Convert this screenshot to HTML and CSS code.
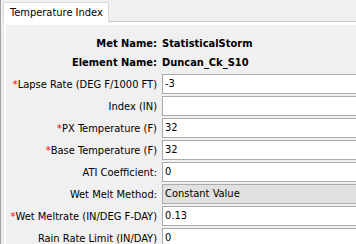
FILE: index.html
```html
<!DOCTYPE html>
<html lang="en">

<head>
  <meta charset="UTF-8" />
  <title>Temperature Index</title>
  <link rel="stylesheet" href="styles.css">
</head>

<body>

  <div class="tabs">
    <div class="tab">Temperature Index</div>
  </div>

  <div class="pane">
    <div class="form">
      <div class="label bold">Met Name:</div>
      <div class="value bold">StatisticalStorm</div>
      <div class="label bold">Element Name:</div>
      <div class="value bold">Duncan_Ck_S10</div>

      <div class="label"><span class="req">*</span>Lapse Rate (DEG F/1000 FT)</div>
      <div class="field">-3</div>

      <div class="label">Index (IN)</div>
      <div class="field"></div>

      <div class="label"><span class="req">*</span>PX Temperature (F)</div>
      <div class="field">32</div>

      <div class="label"><span class="req">*</span>Base Temperature (F)</div>
      <div class="field">32</div>

      <div class="label">ATI Coefficient:</div>
      <div class="field">0</div>

      <div class="label">Wet Melt Method:</div>
      <div class="field combo">Constant Value</div>

      <div class="label"><span class="req">*</span>Wet Meltrate (IN/DEG F-DAY)</div>
      <div class="field">0.13</div>

      <div class="label">Rain Rate Limit (IN/DAY)</div>
      <div class="field">0</div>
    </div>
  </div>

</body>

</html>
```

FILE: styles.css
```css
body {
  margin: 0;
  width: 355px;
  height: 244px;
  overflow: hidden;
  background: #f0f0f0;
  border-left: 1px solid #a0a0a0;
  font-family: "DejaVu Sans Condensed", "DejaVu Sans", sans-serif;
  font-size: 11px;
  color: #000;
}

.tabs {
  display: flex;
  padding: 2px 0 0 2px;
  height: 19px;
}

.tab {
  width: 98px;
  height: 19px;
  padding-left: 6px;
  background: #ffffff;
  border: 1px solid #d9d9d9;
  border-bottom: none;
  line-height: 20px;
  white-space: nowrap;
}

.pane {
  margin-left: 2px;
  height: 230px;
  border-top: 1px solid #c9c9c9;
  border-left: 1px solid #e3e3e3;
}

.form {
  border-top: 3px solid #ffffff;
  border-left: 2px solid #ffffff;
  height: 220px;
  padding-top: 11px;
  display: grid;
  grid-template-columns: 151px 195px;
  grid-auto-rows: 20px;
  grid-template-rows: 17px 17px;
  column-gap: 5px;
  row-gap: 2px;
  align-items: center;
}

.form > .bold {
  margin-top: -2px;
}

.label {
  text-align: right;
  white-space: nowrap;
}

.bold {
  font-weight: bold;
}

.req {
  color: #ff0000;
}

.value {
  text-align: left;
}

.field {
  height: 18px;
  line-height: 18px;
  padding-left: 2px;
  background: #ffffff;
  border: 1px solid #ababab;
}

.combo {
  background: #e1e1e1;
  border-color: #adadad;
}
```
